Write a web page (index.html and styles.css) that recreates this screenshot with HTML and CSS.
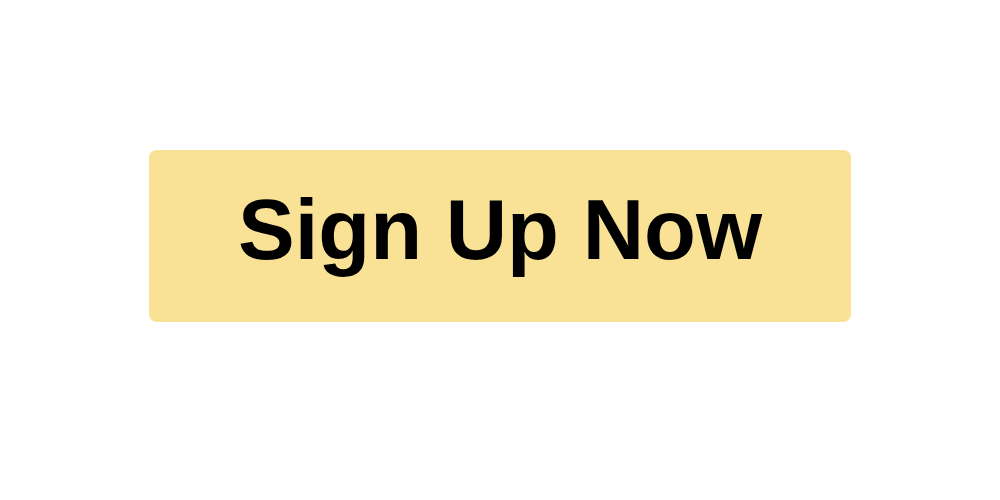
FILE: index.html
```html
<!DOCTYPE html>
<html>
<head>
<meta charset="utf-8">
<link rel="stylesheet" href="styles.css">
</head>
<body>
<div class="page">
  <button class="cta">Sign Up Now</button>
</div>
</body>
</html>
```
FILE: styles.css
```css
html, body { margin: 0; padding: 0; background: #ffffff; }
.page {
  width: 1000px;
  height: 500px;
  padding-top: 150px;
  box-sizing: border-box;
  display: flex;
  justify-content: center;
  align-items: flex-start;
}
.cta {
  width: 702px;
  height: 172px;
  border: none;
  border-radius: 8px;
  background: #f9e296;
  color: #000;
  font-family: "Liberation Sans", Arial, sans-serif;
  font-weight: bold;
  font-size: 85px;
  line-height: 1;
  padding: 0 0 14px 0;
  display: flex;
  align-items: center;
  justify-content: center;
}
```
